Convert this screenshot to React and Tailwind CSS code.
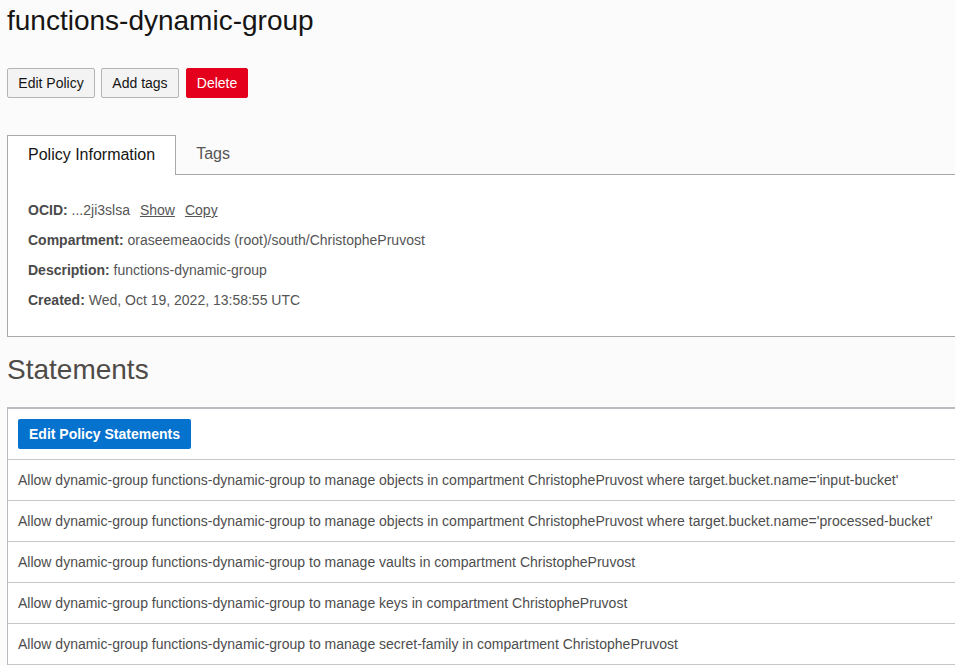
const statements = [
  "Allow dynamic-group functions-dynamic-group to manage objects in compartment ChristophePruvost where target.bucket.name='input-bucket'",
  "Allow dynamic-group functions-dynamic-group to manage objects in compartment ChristophePruvost where target.bucket.name='processed-bucket'",
  'Allow dynamic-group functions-dynamic-group to manage vaults in compartment ChristophePruvost',
  'Allow dynamic-group functions-dynamic-group to manage keys in compartment ChristophePruvost',
  'Allow dynamic-group functions-dynamic-group to manage secret-family in compartment ChristophePruvost',
]

const details = [
  { label: 'Compartment:', value: 'oraseemeaocids (root)/south/ChristophePruvost' },
  { label: 'Description:', value: 'functions-dynamic-group' },
  { label: 'Created:', value: 'Wed, Oct 19, 2022, 13:58:55 UTC' },
]

const App = () => {
  return (
    <div className="h-[665px] w-[955px] overflow-hidden bg-[#fbfbfb] pl-[7px] font-['Liberation_Sans',Arial,sans-serif]">
      {/* Header */}
      <h1 className="pt-[5px] text-[28px] leading-[32px] text-[#161513]">functions-dynamic-group</h1>

      <div className="mt-[31px] flex gap-[6px]">
        <button className="h-[30px] w-[88px] rounded-[2px] border border-[#b4b4b4] bg-[#f3f3f3] text-[14px] text-[#161513]">
          Edit Policy
        </button>
        <button className="h-[30px] w-[78px] rounded-[2px] border border-[#b4b4b4] bg-[#f3f3f3] text-[14px] text-[#161513]">
          Add tags
        </button>
        <button className="ml-px h-[30px] w-[62px] rounded-[2px] border border-[#e4001c] bg-[#e4001c] text-[14px] text-white">
          Delete
        </button>
      </div>

      {/* Tabs */}
      <div className="mt-[37px] flex border-b border-[#a9a9a9]">
        <div className="-mb-px h-[40px] border border-b-0 border-[#a9a9a9] bg-white px-5 text-[16px] leading-[38px] text-[#161513]">
          Policy Information
        </div>
        <div className="h-[39px] px-5 text-[16px] leading-[38px] text-[#555]">Tags</div>
      </div>

      <div className="w-[960px] border-b border-l border-[#a9a9a9] bg-white px-5 pb-[21px] pt-[20px] text-[14px] leading-[30px] text-[#555]">
        <div>
          <span className="font-bold text-[#4a4a4a]">OCID:</span> ...2ji3slsa
          <a className="ml-[10px] underline">Show</a>
          <a className="ml-[10px] underline">Copy</a>
        </div>
        {details.map((d) => (
          <div key={d.label}>
            <span className="font-bold text-[#4a4a4a]">{d.label}</span> {d.value}
          </div>
        ))}
      </div>

      {/* Statements */}
      <h2 className="mt-[17px] text-[28px] leading-[32px] text-[#4f4b48]">Statements</h2>

      <div className="mt-[21px] w-[960px] border-l border-t-2 border-[#b9bcc0] bg-white">
        <div className="border-b border-[#c4c7ca] px-[10px] py-[10px]">
          <button className="h-[30px] rounded-[2px] bg-[#0572ce] px-[11px] text-[14px] font-bold text-white">
            Edit Policy Statements
          </button>
        </div>
        {statements.map((s, i) => (
          <div key={i} className="flex h-[41px] items-center border-b border-[#c4c7ca] px-[10px] text-[14px] text-[#4d4d4d]">
            {s}
          </div>
        ))}
      </div>
    </div>
  )
}

export default App
